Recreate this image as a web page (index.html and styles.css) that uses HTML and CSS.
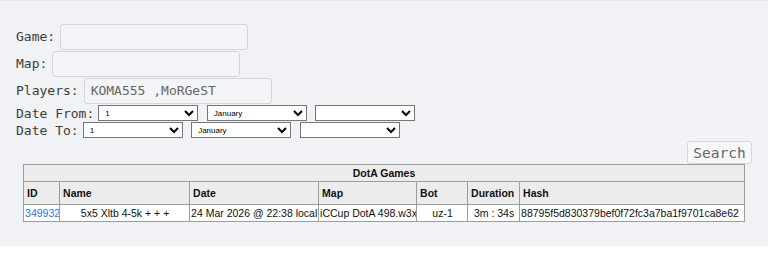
FILE: index.html
```html
<!DOCTYPE html>
<html>
<head>
<meta charset="utf-8">
<title>DotA Games</title>
<link rel="stylesheet" href="styles.css">
</head>
<body>
<div class="page">
  <form class="search">
    <div class="row"><label class="lbl">Game:</label><input class="txt" type="text"></div>
    <div class="row"><label class="lbl">Map:</label><input class="txt" type="text"></div>
    <div class="row"><label class="lbl">Players:</label><input class="txt" type="text" value="KOMA555 ,MoRGeST"></div>
    <div class="row sel-row">
      <label class="lbl">Date From:</label>
      <select class="sel"><option>1</option></select>
      <select class="sel"><option>January</option></select>
      <select class="sel"><option></option></select>
    </div>
    <div class="row sel-row">
      <label class="lbl">Date To:</label>
      <select class="sel"><option>1</option></select>
      <select class="sel"><option>January</option></select>
      <select class="sel"><option></option></select>
    </div>
    <div class="actions"><button class="btn" type="button">Search</button></div>
  </form>
  <table class="games">
    <colgroup>
      <col class="c-id"><col class="c-name"><col class="c-date"><col class="c-map"><col class="c-bot"><col class="c-dur"><col>
    </colgroup>
    <thead>
      <tr><th class="title" colspan="7">DotA Games</th></tr>
      <tr class="heads"><th>ID</th><th>Name</th><th>Date</th><th>Map</th><th>Bot</th><th>Duration</th><th>Hash</th></tr>
    </thead>
    <tbody>
      <tr>
        <td><a href="#">349932</a></td>
        <td class="ctr">5x5 Xltb 4-5k + + +</td>
        <td>24 Mar 2026 @ 22:38 local</td>
        <td>iCCup DotA 498.w3x</td>
        <td class="ctr">uz-1</td>
        <td class="ctr">3m : 34s</td>
        <td>88795f5d830379bef0f72fc3a7ba1f9701ca8e62</td>
      </tr>
    </tbody>
  </table>
</div>
</body>
</html>
```
FILE: styles.css
```css
html, body {
  margin: 0;
  padding: 0;
  background: #ffffff;
}

.page {
  background: #f1f2f6;
  border-top: 1px solid #e5e6ea;
  padding: 22px 0 24px;
}

.search {
  margin: 0;
  padding: 0 16px;
}

.row {
  display: flex;
  align-items: center;
  gap: 5px;
  height: 27px;
}

.sel-row {
  height: 16px;
  gap: 8.5px;
  margin-top: 1px;
}

.sel-row .lbl {
  margin-right: -4.5px;
}

.lbl {
  font-family: "DejaVu Sans Mono", monospace;
  font-size: 13px;
  color: #3c3c3c;
}

.txt {
  box-sizing: border-box;
  width: 188px;
  height: 26px;
  margin: 0;
  padding: 0 6px;
  border: 1px solid #d4d5d9;
  border-radius: 3px;
  background: #f3f4f7;
  font-family: "DejaVu Sans Mono", monospace;
  font-size: 13px;
  color: #666;
  outline: none;
}

.sel {
  box-sizing: border-box;
  width: 100px;
  height: 16px;
  margin: 0;
  padding: 0 2px;
  font-family: "Liberation Sans", Arial, sans-serif;
  font-size: 8px;
  color: #000;
  background: #fff;
}

.actions {
  display: flex;
  justify-content: flex-end;
  margin-top: 3px;
}

.btn {
  box-sizing: border-box;
  width: 65px;
  height: 23px;
  margin: 0;
  padding: 0;
  border: 1px solid #d6d7db;
  border-radius: 3px;
  background: #f6f7f9;
  font-family: "DejaVu Sans Mono", monospace;
  font-size: 14.5px;
  color: #666;
}

.games {
  width: 94%;
  margin: 0 auto;
  table-layout: fixed;
  border-collapse: collapse;
  border: 1px solid #9c9c9c;
  font-family: "Liberation Sans", Arial, sans-serif;
  font-size: 10.5px;
  color: #111;
}

.c-id { width: 36px; }
.c-name { width: 130px; }
.c-date { width: 129px; }
.c-map { width: 98px; }
.c-bot { width: 51px; }
.c-dur { width: 52px; }

.games th {
  background: #ececec;
  border: 1px solid #9c9c9c;
  font-weight: bold;
  text-align: left;
  white-space: nowrap;
  overflow: hidden;
}

.games th.title {
  text-align: center;
  padding: 2px 3px;
}

.heads th {
  padding: 5px 3px;
}

.games td {
  background: #fff;
  border: 1px solid #9c9c9c;
  padding: 2px 0 2px 1px;
  white-space: nowrap;
  overflow: hidden;
}

.games td.ctr {
  text-align: center;
}

.games a {
  color: #2a79e0;
  text-decoration: none;
}
```
